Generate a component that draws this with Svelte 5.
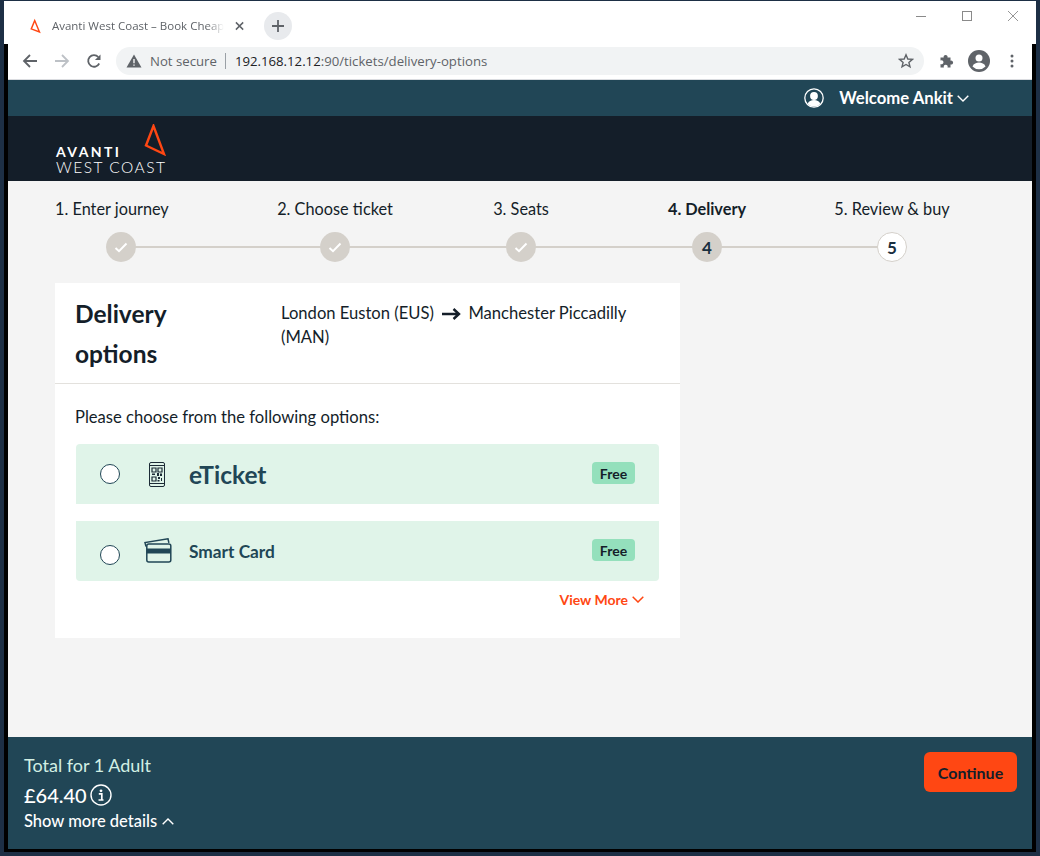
<script lang="ts">
  const steps = [
    { label: "1. Enter journey", state: "done" },
    { label: "2. Choose ticket", state: "done" },
    { label: "3. Seats", state: "done" },
    { label: "4. Delivery", state: "current", num: 4 },
    { label: "5. Review & buy", state: "todo", num: 5 },
  ];
</script>

<div class="window">
  <div class="tabstrip">
    <div class="tab">
      <svg class="favicon" width="12" height="16" viewBox="0 0 12 16"><path d="M5.2 2 1.4 11.2 10.4 14.6Z" fill="none" stroke="#ff4713" stroke-width="1.6"/></svg>
      <span class="tab-title">Avanti West Coast – Book Cheap</span>
      <svg class="tab-x" width="10" height="10" viewBox="0 0 10 10"><path d="M1 1l8 8M9 1l-8 8" stroke="#5f6368" stroke-width="1.6"/></svg>
    </div>
    <div class="newtab">
      <svg width="12" height="12" viewBox="0 0 12 12"><path d="M6 0v12M0 6h12" stroke="#5f6368" stroke-width="1.8"/></svg>
    </div>
    <div class="winctl">
      <svg width="10" height="10" viewBox="0 0 10 10"><path d="M0 5.5h10" stroke="#8a8a8a"/></svg>
      <svg width="10" height="10" viewBox="0 0 10 10"><rect x=".5" y=".5" width="9" height="9" fill="none" stroke="#8a8a8a"/></svg>
      <svg width="10" height="10" viewBox="0 0 10 10"><path d="M0 0l10 10M10 0L0 10" stroke="#8a8a8a" stroke-width=".9"/></svg>
    </div>
  </div>

  <div class="frame">
    <div class="toolbar">
      <svg class="nav" width="16" height="16" viewBox="0 0 16 16"><path d="M15 8H2M8 2 2 8l6 6" fill="none" stroke="#5f6368" stroke-width="1.8"/></svg>
      <svg class="nav" width="16" height="16" viewBox="0 0 16 16"><path d="M1 8h13M8 2l6 6-6 6" fill="none" stroke="#bdc1c6" stroke-width="1.8"/></svg>
      <svg class="nav" width="16" height="16" viewBox="0 0 16 16"><path d="M13.2 10.5A5.8 5.8 0 1 1 12.3 4" fill="none" stroke="#5f6368" stroke-width="1.8"/><path d="M14.5 1.5v5.6H8.9Z" fill="#5f6368"/></svg>
      <div class="omnibox">
        <svg width="16" height="14" viewBox="0 0 16 14"><path d="M8 0.5 15.5 13.5H.5Z" fill="#5f6368"/><path d="M8 5v4.2M8 10.4v1.4" stroke="#fff" stroke-width="1.3"/></svg>
        <span class="secure">Not secure</span>
        <span class="sep"></span>
        <span class="url"><b>192.168.12.12</b>:90/tickets/delivery-options</span>
        <svg class="star" width="16" height="16" viewBox="0 0 16 16"><path d="M8 1.8 9.8 6l4.6.4-3.5 3 1.1 4.5L8 11.5l-4 2.4 1.1-4.5-3.5-3L6.200 6Z" fill="none" stroke="#5f6368" stroke-width="1.4"/></svg>
      </div>
      <svg class="puzzle" width="16" height="16" viewBox="0 0 16 16"><path d="M1 5h3.200a2 2 0 1 1 3.800 0H11v3.200a2 2 0 1 1 0 3.800V15H8a2 2 0 1 0-3.600 0H1v-3.500a2 2 0 1 0 0-3.500Z" fill="#5f6368" transform="translate(.5 -.5)"/></svg>
      <svg class="avatar" width="22" height="22" viewBox="0 0 22 22"><circle cx="11" cy="11" r="11" fill="#5f6368"/><circle cx="11" cy="8" r="3.500" fill="#fff"/><path d="M4.500 16.500c1-3 4-4 6.500-4s5.500 1 6.500 4a9 9 0 0 1-13 0Z" fill="#fff"/></svg>
      <svg class="dots" width="4" height="14" viewBox="0 0 4 14"><circle cx="2" cy="2" r="1.500" fill="#5f6368"/><circle cx="2" cy="7" r="1.500" fill="#5f6368"/><circle cx="2" cy="12" r="1.500" fill="#5f6368"/></svg>
    </div>

    <div class="topbar">
      <svg width="20" height="20" viewBox="0 0 20 20"><circle cx="10" cy="10" r="9.200" fill="#214656" stroke="#fff" stroke-width="1.300"/><circle cx="10" cy="8" r="3.900" fill="#fff"/><path d="M3.700 16c.8-2.800 3.500-3.900 6.300-3.900s5.500 1.100 6.300 3.900a9 9 0 0 1-12.600 0Z" fill="#fff"/></svg>
      <span class="welcome">Welcome Ankit</span>
      <svg width="12" height="7" viewBox="0 0 12 7"><path d="M.7.7 6 6l5.300-5.300" fill="none" stroke="#fff" stroke-width="1.400"/></svg>
    </div>

    <header class="brand">
      <div class="logo">
        <svg class="logo-mark" width="22" height="32" viewBox="0 0 22 32"><path d="M9.500 2 2 21.500 20 30Z" fill="none" stroke="#ff4713" stroke-width="2.400"/></svg>
        <div class="logo-a">AVANTI</div>
        <div class="logo-b">WEST COAST</div>
      </div>
    </header>

    <main>
      <div class="steps">
        <div class="steps-line"></div>
        {#each steps as step}
          <div class="step" class:current={step.state === "current"}>
            <div class="step-label">{step.label}</div>
            <div class="dot {step.state}">
              {#if step.state === "done"}
                <svg width="14" height="11" viewBox="0 0 14 11"><path d="M1.500 6 5 9.200 12.500 1.500" fill="none" stroke="#fff" stroke-width="2"/></svg>
              {:else}
                {step.num}
              {/if}
            </div>
          </div>
        {/each}
      </div>

      <section class="card">
        <div class="card-head">
          <h1>Delivery options</h1>
          <p class="route">
            London Euston (EUS)
            <svg width="20" height="12" viewBox="0 0 20 12"><path d="M1 6h17M12.500 1 18 6l-5.500 5" fill="none" stroke="#141e29" stroke-width="2.400"/></svg>
            Manchester Piccadilly (MAN)
          </p>
        </div>
        <div class="card-body">
          <p class="intro">Please choose from the following options:</p>

          <div class="option">
            <span class="radio"></span>
            <svg class="ic-phone" width="16" height="25" viewBox="0 0 16 25">
              <rect x=".5" y=".5" width="15" height="24" rx="1.500" fill="none" stroke="#1c2b36"/>
              <path d="M.5 3.500h15M.5 21.500h15" stroke="#1c2b36"/>
              <path d="M3 6h4v4H3zM9 6h4v4H9zM3 15h4v4H3z" fill="none" stroke="#1c2b36" stroke-width="1.200"/>
              <path d="M3 11.500h3v1.500H3zM8 11h2v3H8zM11 11.500h2V14h-2zM9 15h2v2H9zM12 16h1v3h-1zM8.500 18h2v1.500h-2z" fill="#1c2b36"/>
            </svg>
            <span class="opt-title big">eTicket</span>
            <span class="free">Free</span>
          </div>

          <div class="option second">
            <span class="radio"></span>
            <svg class="ic-card" width="28" height="26" viewBox="0 0 28 26">
              <path d="M2 8.500 1 4.500 24 .8l.9 4" fill="none" stroke="#214656" stroke-width="1.500"/>
              <rect x="2.800" y="6" width="24" height="18" rx="2" fill="#e0f4e9" stroke="#214656" stroke-width="1.500"/>
              <rect x="2.800" y="10.500" width="24" height="5" fill="#214656"/>
            </svg>
            <span class="opt-title">Smart Card</span>
            <span class="free">Free</span>
          </div>

          <div class="more">
            View More
            <svg width="12" height="7" viewBox="0 0 12 7"><path d="M.7.7 6 6l5.300-5.300" fill="none" stroke="#ff4713" stroke-width="1.500"/></svg>
          </div>
        </div>
      </section>
    </main>

    <footer>
      <div class="totals">
        <div class="total-label">Total for 1 Adult</div>
        <div class="price">
          £64.40
          <svg width="22" height="22" viewBox="0 0 22 22"><circle cx="11" cy="11" r="10" fill="none" stroke="#fff" stroke-width="1.400"/><circle cx="11" cy="6.800" r="1.400" fill="#fff"/><path d="M8.800 9.800h3v6M8.500 16h5" fill="none" stroke="#fff" stroke-width="1.700"/></svg>
        </div>
        <div class="details">
          Show more details
          <svg width="12" height="7" viewBox="0 0 12 7"><path d="M.7 6.300 6 1l5.300 5.300" fill="none" stroke="#fff" stroke-width="1.400"/></svg>
        </div>
      </div>
      <button type="button" class="continue">Continue</button>
    </footer>
  </div>
</div>

<style>
  :global(body) {
    margin: 0;
    background: #1d2f45;
  }
  .window {
    display: flex;
    flex-direction: column;
    width: 1032px;
    height: 851px;
    margin: 1px 4px 4px;
    font-family: Lato, sans-serif;
    color: #141e29;
  }
  .tabstrip {
    display: flex;
    align-items: center;
    height: 43px;
    flex-shrink: 0;
    background: #fff;
    font-family: "Open Sans", sans-serif;
  }
  .tab {
    display: flex;
    align-items: center;
    margin-top: 6px;
    padding-left: 26px;
    width: 240px;
    box-sizing: border-box;
  }
  .tab-title {
    margin-left: 11px;
    width: 172px;
    white-space: nowrap;
    font-size: 11.500px;
    color: #5f6368;
    mask-image: linear-gradient(to right, #000 90%, transparent);
  }
  .tab-x {
    margin-left: 11px;
  }
  .newtab {
    display: flex;
    align-items: center;
    justify-content: center;
    width: 28px;
    height: 28px;
    margin: 7px 0 0 20px;
    border-radius: 50%;
    background: #e8eaed;
  }
  .winctl {
    display: flex;
    gap: 36px;
    margin: -13px 0 0 auto;
    padding-right: 18px;
  }
  .frame {
    flex: 1;
    display: flex;
    flex-direction: column;
    min-height: 0;
    border: solid #000;
    border-width: 0 4px 3px;
  }
  .toolbar {
    display: flex;
    align-items: center;
    height: 36px;
    flex-shrink: 0;
    box-sizing: border-box;
    padding-bottom: 1px;
    background: #fff;
    border-bottom: 1px solid #dadce0;
    font-family: "Open Sans", sans-serif;
  }
  .nav {
    margin-left: 14px;
    margin-right: 2px;
    flex-shrink: 0;
  }
  .nav + .nav {
    margin-left: 14px;
  }
  .omnibox {
    display: flex;
    align-items: center;
    width: 808px;
    height: 28px;
    box-sizing: border-box;
    margin-left: 12px;
    padding: 0 10px;
    border-radius: 14px;
    background: #f1f3f4;
    font-size: 13.200px;
  }
  .secure {
    margin-left: 8px;
    color: #5f6368;
  }
  .sep {
    width: 1px;
    height: 16px;
    margin: 0 9px 0 8px;
    background: #9aa0a6;
  }
  .url {
    color: #5f6368;
  }
  .url b {
    font-weight: 400;
    color: #202124;
  }
  .star {
    margin-left: auto;
  }
  .puzzle {
    margin-left: 15px;
  }
  .avatar {
    margin-left: 13px;
  }
  .dots {
    margin-left: 20px;
  }
  .topbar {
    display: flex;
    align-items: center;
    justify-content: flex-end;
    height: 36px;
    flex-shrink: 0;
    box-sizing: border-box;
    padding-right: 63px;
    background: #214656;
    color: #fff;
  }
  .welcome {
    margin: 0 4px 0 15px;
    font-size: 16.700px;
    font-weight: 700;
  }
  .brand {
    height: 65px;
    flex-shrink: 0;
    background: #141e29;
  }
  .logo {
    position: relative;
    padding: 28px 0 0 48px;
    color: #fff;
  }
  .logo-mark {
    position: absolute;
    left: 136px;
    top: 8px;
  }
  .logo-a {
    font-size: 14px;
    font-weight: 700;
    line-height: 16px;
    letter-spacing: 2.400px;
  }
  .logo-b {
    font-size: 15.500px;
    font-weight: 300;
    line-height: 15px;
    letter-spacing: 1.500px;
  }
  main {
    flex: 1;
    min-height: 0;
    padding: 0 0 0 47px;
    background: #f4f4f4;
  }
  .steps {
    position: relative;
    display: grid;
    grid-template-columns: 187px 186px 186px 186px 184px;
    padding-top: 18px;
  }
  .steps-line {
    position: absolute;
    left: 66px;
    top: 65px;
    width: 771px;
    height: 2px;
    background: #d4d0ca;
  }
  .step {
    position: relative;
    display: flex;
    flex-direction: column;
    align-items: center;
    font-size: 16.300px;
  }
  .step:nth-child(2) {
    align-items: flex-start;
  }
  .step-label {
    height: 19px;
    line-height: 19px;
    white-space: nowrap;
  }
  .step.current .step-label {
    font-weight: 700;
  }
  .dot {
    display: flex;
    align-items: center;
    justify-content: center;
    width: 30px;
    height: 30px;
    margin-top: 14px;
    box-sizing: border-box;
    border-radius: 50%;
    background: #d4d0ca;
    font-size: 17px;
    font-weight: 700;
    color: #1a2f3f;
  }
  .step:nth-child(2) .dot {
    margin-left: 51px;
  }
  .dot.todo {
    background: #fff;
    border: 1px solid #d4d0ca;
  }
  .card {
    width: 625px;
    height: 355px;
    margin-top: 21px;
    background: #fff;
  }
  .card-head {
    display: flex;
    height: 100px;
    border-bottom: 1px solid #e3e1dd;
  }
  h1 {
    width: 130px;
    flex-shrink: 0;
    margin: 11px 0 0 20px;
    font-size: 24.500px;
    font-weight: 700;
    line-height: 40px;
  }
  .route {
    width: 360px;
    margin: 18px 0 0 76px;
    font-size: 16.600px;
    line-height: 24px;
  }
  .route svg {
    margin: 0 3px;
    vertical-align: -1px;
  }
  .card-body {
    padding: 23px 21px 0;
  }
  .intro {
    margin: 0 0 17px -1px;
    font-size: 16.600px;
    line-height: 20px;
  }
  .option {
    display: flex;
    align-items: center;
    height: 60px;
    padding: 0 24px;
    border-radius: 4px 4px 0 0;
    background: #e0f4e9;
  }
  .option.second {
    margin-top: 17px;
    border-radius: 0 0 4px 4px;
  }
  .radio {
    width: 20px;
    height: 20px;
    flex-shrink: 0;
    box-sizing: border-box;
    border: 1px solid #214656;
    border-radius: 50%;
    background: #fff;
  }
  .second .radio {
    margin-top: 8px;
  }
  .ic-phone {
    margin: 0 0 0 29px;
  }
  .ic-card {
    margin: 0 0 0 24px;
  }
  .opt-title {
    margin-left: 24px;
    font-size: 17.300px;
    font-weight: 700;
    color: #214656;
  }
  .second .opt-title {
    margin-left: 17px;
  }
  .opt-title.big {
    font-size: 24.500px;
  }
  .free {
    display: flex;
    align-items: center;
    justify-content: center;
    width: 43px;
    height: 22px;
    margin: 0 0 2px auto;
    border-radius: 4px;
    background: #94e0bc;
    font-size: 14px;
    font-weight: 700;
  }
  .more {
    display: flex;
    align-items: center;
    justify-content: flex-end;
    gap: 4px;
    margin-top: 10px;
    padding-right: 15px;
    font-size: 14px;
    font-weight: 700;
    line-height: 17px;
    color: #ff4713;
  }
  footer {
    display: flex;
    justify-content: space-between;
    height: 112px;
    flex-shrink: 0;
    box-sizing: border-box;
    padding: 15px 15px 0 16px;
    background: #214656;
    color: #fff;
  }
  .total-label {
    font-size: 18px;
    line-height: 26px;
    color: #d2efe4;
  }
  .price {
    display: flex;
    align-items: center;
    gap: 3px;
    margin-top: 4px;
    font-size: 20px;
    font-weight: 500;
    line-height: 26px;
  }
  .details {
    display: flex;
    align-items: center;
    gap: 5px;
    margin-top: 3px;
    font-size: 16.500px;
    font-weight: 500;
    line-height: 20px;
  }
  .continue {
    width: 93px;
    height: 40px;
    border: none;
    border-radius: 6px;
    background: #ff4713;
    font: 700 16px Lato, sans-serif;
    color: #141e29;
  }
</style>
